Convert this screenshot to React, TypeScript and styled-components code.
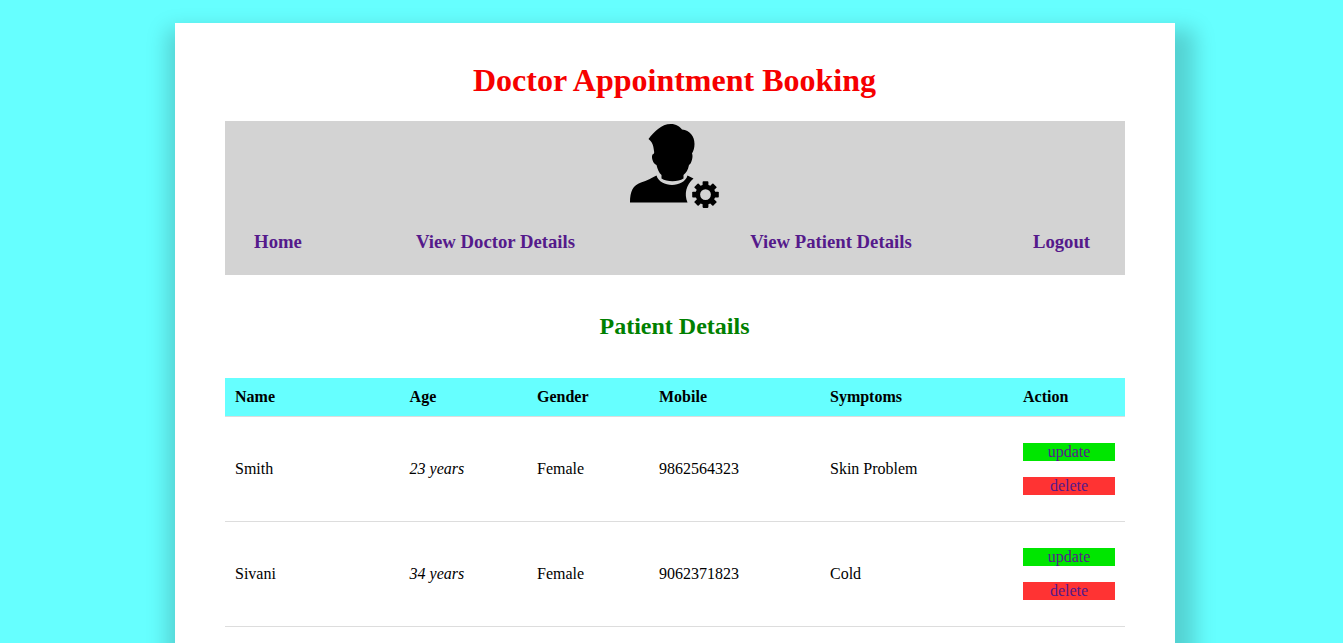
import React from "react";
import styled, { createGlobalStyle } from "styled-components";

const GlobalStyle = createGlobalStyle`
  html, body { margin: 0; height: 100%; overflow: hidden; }
  body {
    background: #66ffff;
    color: #000;
    font-family: "Liberation Serif", "Times New Roman", serif;
    font-size: 16px;
  }
`;

const Page = styled.div`
  display: flex;
  padding: 23px 0 0 175px;
`;

const Card = styled.main`
  box-sizing: border-box;
  flex: none;
  width: 1000px;
  min-height: 720px;
  padding: 38px 50px 50px;
  background: #fff;
  box-shadow: 6px 20px 20px 14px rgba(0, 0, 0, 0.18);
`;

const Title = styled.h1`
  margin: 0;
  padding-right: 1px;
  height: 60px;
  line-height: 38px;
  font-size: 32px;
  text-align: center;
  color: #f60000;
`;

const Header = styled.header`
  box-sizing: border-box;
  height: 154px;
  padding-top: 2px;
  background: #d3d3d3;
`;

const Avatar = styled.svg`
  display: block;
  width: 90px;
  height: 86px;
  margin: 0 auto;
`;

const Nav = styled.nav`
  display: grid;
  grid-template-columns: 106px 329px 342px 119px;
  padding-top: 22px;
`;

const NavLink = styled.a`
  font-size: 18.72px;
  line-height: 22px;
  font-weight: bold;
  text-align: center;
  color: #551a8b;
  text-decoration: none;
`;

const Subtitle = styled.h2`
  margin: 37px 0 38px;
  padding-right: 1px;
  height: 28px;
  line-height: 28px;
  font-size: 24px;
  text-align: center;
  color: #008000;
`;

const Table = styled.table`
  width: 900px;
  table-layout: fixed;
  border-collapse: separate;
  border-spacing: 0;
`;

const Column = styled.col<{ $width: number }>`
  width: ${(p) => p.$width}px;
`;

const HeadCell = styled.th`
  padding: 10px;
  line-height: 18px;
  text-align: left;
  background: #66ffff;
  border-bottom: 1px solid #ddd;
`;

const Cell = styled.td<{ $italic?: boolean }>`
  padding: 10px;
  line-height: 18px;
  font-style: ${(p) => (p.$italic ? "italic" : "normal")};
  border-bottom: 1px solid #ddd;
`;

const Action = styled.p<{ $color: string }>`
  margin: 16px 0;
  height: 18px;
  line-height: 18px;
  text-align: center;
  background: ${(p) => p.$color};
`;

const ActionLink = styled.a`
  color: #551a8b;
  text-decoration: none;
`;

const links = ["Home", "View Doctor Details", "View Patient Details", "Logout"];

const columns = [
  { label: "Name", width: 174.6 },
  { label: "Age", width: 127.4 },
  { label: "Gender", width: 122 },
  { label: "Mobile", width: 171 },
  { label: "Symptoms", width: 193 },
  { label: "Action", width: 112 },
];

const patients = [
  { name: "Smith", age: 23, gender: "Female", mobile: "9862564323", symptoms: "Skin Problem" },
  { name: "Sivani", age: 34, gender: "Female", mobile: "9062371823", symptoms: "Cold" },
];

const teeth = [0, 45, 90, 135, 180, 225, 270, 315];

function AdminIcon() {
  return (
    <Avatar viewBox="0 0 90 86" aria-hidden="true">
      <path d="M18.500 16 C24 9 31 1 41 1 C46 1 50 3.500 52 6.500 C60 7.500 64.500 13 64.500 21 C64.500 25 63.500 28 62 30.500 C63.500 33 61.500 41 59 42 C58 47 56 50 53.500 52 L53.500 55.500 C48 59 37 59 31.500 55.500 L31.500 52 C29 50 27.500 46 26.500 42 C23 41 21 34 22.500 31.500 C24 31 24.500 30 24 28 C23.500 23 22.500 19 18.500 16 Z" />
      <path d="M0 79.500 C0 68 3 62.500 11 59.500 C17 57.500 22 55 26.500 52.500 C30 65 54 65 57.500 52.500 L63.500 55.500 C56 62 54 71 57.500 79.500 Z" />
      <g transform="translate(75.500 71.600)">
        <circle r="7.700" fill="none" stroke="#000" strokeWidth="4.600" />
        {teeth.map((angle) => (
          <rect key={angle} x="-2.900" y="-13.300" width="5.800" height="5.500" rx="0.800" transform={`rotate(${angle})`} />
        ))}
      </g>
    </Avatar>
  );
}

export default function App() {
  return (
    <>
      <GlobalStyle />
      <Page>
        <Card>
          <Title>Doctor Appointment Booking</Title>
          <Header>
            <AdminIcon />
            <Nav>
              {links.map((label) => (
                <NavLink key={label} href="#">{label}</NavLink>
              ))}
            </Nav>
          </Header>
          <Subtitle>Patient Details</Subtitle>
          <Table>
            <colgroup>
              {columns.map((c) => <Column key={c.label} $width={c.width} />)}
            </colgroup>
            <thead>
              <tr>
                {columns.map((c) => <HeadCell key={c.label}>{c.label}</HeadCell>)}
              </tr>
            </thead>
            <tbody>
              {patients.map((p) => (
                <tr key={p.name}>
                  <Cell>{p.name}</Cell>
                  <Cell $italic>{p.age} years</Cell>
                  <Cell>{p.gender}</Cell>
                  <Cell>{p.mobile}</Cell>
                  <Cell>{p.symptoms}</Cell>
                  <Cell>
                    <Action $color="#00e600"><ActionLink href="#">update</ActionLink></Action>
                    <Action $color="#ff3333"><ActionLink href="#">delete</ActionLink></Action>
                  </Cell>
                </tr>
              ))}
            </tbody>
          </Table>
        </Card>
      </Page>
    </>
  );
}
